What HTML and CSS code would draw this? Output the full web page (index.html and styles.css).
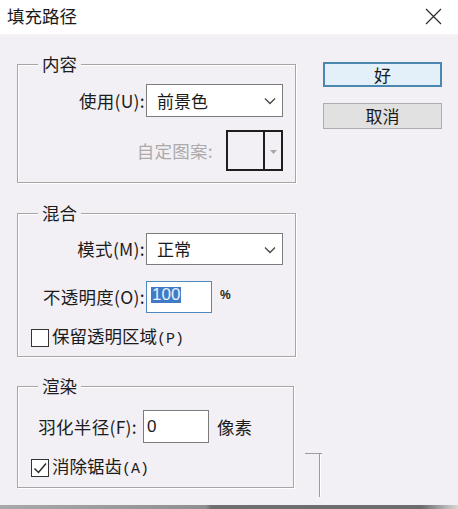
FILE: index.html
```html
<!DOCTYPE html>
<html lang="zh-CN">
<head>
<meta charset="utf-8">
<title>填充路径</title>
<link rel="stylesheet" href="styles.css">
</head>
<body>
<div class="window">
  <header class="titlebar">
    <span class="title">填充路径</span>
    <svg class="close" width="17" height="17" viewBox="0 0 17 17"><path d="M1 1L16 16M16 1L1 16" stroke="#2b2b2b" stroke-width="1.2" fill="none"/></svg>
  </header>
  <main class="content">
    <div class="groups">
      <section class="group g1">
        <span class="legend">内容</span>
        <div class="row">
          <span class="lbl">使用(U):</span>
          <div class="select">前景色<svg class="chev" width="12" height="8" viewBox="0 0 12 8"><path d="M1 1.5L6 6.5L11 1.5" stroke="#4a4a4a" stroke-width="1.4" fill="none"/></svg></div>
        </div>
        <div class="row gap13">
          <span class="lbl muted">自定图案:</span>
          <div class="pattern"><span class="swatch"></span><span class="pbtn"><svg width="7" height="4" viewBox="0 0 7 4"><path d="M0 0H7L3.5 4Z" fill="#a8a8a8"/></svg></span></div>
        </div>
      </section>

      <section class="group g2">
        <span class="legend">混合</span>
        <div class="row">
          <span class="lbl">模式(M):</span>
          <div class="select h32">正常<svg class="chev" width="12" height="8" viewBox="0 0 12 8"><path d="M1 1.5L6 6.5L11 1.5" stroke="#4a4a4a" stroke-width="1.4" fill="none"/></svg></div>
        </div>
        <div class="row gap16">
          <span class="lbl lbl-op">不透明度(O):</span>
          <div class="field focus"><span class="sel">100</span></div>
          <span class="unit pct">%</span>
        </div>
        <label class="check gap15">
          <span class="box"></span>
          <span class="ctext">保留透明区域<span class="mono">(P)</span></span>
        </label>
      </section>

      <section class="group g3">
        <span class="legend">渲染</span>
        <div class="row">
          <span class="lbl lbl-f">羽化半径(F):</span>
          <div class="field h33"><span class="val">0</span></div>
          <span class="unit">像素</span>
        </div>
        <label class="check gap15">
          <span class="box"><svg width="16" height="16" viewBox="0 0 16 16"><path d="M2.5 8.5L6.5 12.5L14 3.5" stroke="#2a2a2a" stroke-width="1.5" fill="none"/></svg></span>
          <span class="ctext">消除锯齿<span class="mono">(A)</span></span>
        </label>
      </section>
    </div>

    <div class="buttons">
      <button class="btn primary">好</button>
      <button class="btn">取消</button>
      <svg class="bracket" width="18" height="45" viewBox="0 0 18 45"><path d="M0 0.5H17M14.5 0V44" stroke="#9c9c9c" stroke-width="1" fill="none"/><path d="M15.5 2V44" stroke="#ffffff" stroke-width="1" fill="none"/></svg>
    </div>
  </main>
  <div class="taskbar"></div>
</div>
</body>
</html>
```

FILE: styles.css
```css
* { box-sizing: border-box; }

html, body {
  margin: 0;
  padding: 0;
  background: #f3f0f5;
}

.window {
  width: 458px;
  height: 509px;
  display: flex;
  flex-direction: column;
  overflow: hidden;
  font-family: "Noto Sans CJK SC", "Noto Sans", sans-serif;
  font-size: 17.5px;
  color: #1c1c1c;
  background: #f3f0f5;
}

.titlebar {
  height: 35px;
  flex: none;
  background: #ffffff;
  display: flex;
  align-items: center;
  justify-content: space-between;
  padding: 0 16px 2px 7px;
  border-bottom: 1px solid #f6f4f8;
}

.title {
  font-size: 17.5px;
  line-height: 22px;
  color: #1a1a1a;
}

.close { display: block; margin-top: 1px; }

.content {
  flex: 1;
  display: flex;
  align-items: flex-start;
  padding-left: 17px;
}

.groups {
  width: 279px;
  display: flex;
  flex-direction: column;
}

.group {
  position: relative;
  border: 1px solid #a6a6a6;
  box-shadow: inset 1px 1px 0 #ffffff, 1px 1px 0 #ffffff;
  padding: 19px 11px 11px 0;
  display: flex;
  flex-direction: column;
}

.g1 { margin-top: 29px; }
.g2 { margin-top: 30px; padding-bottom: 9px; }
.g3 { margin-top: 29px; padding-top: 23px; padding-bottom: 10px; width: 277px; }

.legend {
  position: absolute;
  top: -12px;
  left: 20px;
  padding: 0 4px;
  background: #f3f0f5;
  line-height: 22px;
  font-size: 17.5px;
}

.row {
  display: flex;
  align-items: center;
}

.gap13 { margin-top: 13px; }
.gap15 { margin-top: 15px; }
.gap16 { margin-top: 16px; }

.lbl {
  width: 127px;
  text-align: right;
  line-height: 22px;
  white-space: nowrap;
  margin-right: 1px;
  letter-spacing: 0.3px;
}

.lbl-op { margin-right: 1px; }
.lbl-f { width: 119px; margin-right: 6px; }

.muted { color: #ababab; margin-right: 12px; width: 195px; }

.select {
  width: 137px;
  height: 33px;
  background: #ffffff;
  border: 1px solid #7c7c7c;
  display: flex;
  align-items: center;
  justify-content: space-between;
  padding: 0 6px 0 10px;
  line-height: 22px;
  font-size: 17px;
}

.select.h32 { height: 32px; }

.chev { display: block; margin-top: 1px; }

.pattern {
  width: 57px;
  height: 41px;
  border: 2px solid #1e1e1e;
  display: flex;
  margin-right: 1px;
  margin-left: auto;
}

.swatch {
  width: 37px;
  border-right: 2px solid #1e1e1e;
}

.pbtn {
  flex: 1;
  display: flex;
  align-items: center;
  justify-content: center;
  padding-top: 2px;
}

.field {
  width: 66px;
  height: 32px;
  background: #ffffff;
  border: 1px solid #7c7c7c;
  display: flex;
  align-items: center;
  padding-left: 4px;
  font-family: "Liberation Sans", Arial, sans-serif;
  font-size: 17px;
}

.field.focus {
  border-color: #4f88bf;
  margin-left: 0;
  padding-bottom: 5px;
  padding-left: 4px;
}

.field.h33 { height: 33px; padding-left: 3px; }

.sel {
  background: #3f7bc6;
  color: #e8f0fb;
  line-height: 16px;
  padding: 0 1px;
}

.val { line-height: 18px; }

.unit {
  margin-left: 8px;
  line-height: 22px;
}

.pct {
  font-family: "Liberation Sans", Arial, sans-serif;
  font-size: 12px;
  font-weight: bold;
  line-height: 12px;
  margin-bottom: 5px;
}

.check {
  display: flex;
  align-items: center;
  padding-left: 13px;
  height: 19px;
}

.box {
  width: 18px;
  height: 18px;
  border: 1px solid #333333;
  background: #ffffff;
  display: flex;
  align-items: center;
  justify-content: center;
  margin-right: 3px;
}

.ctext {
  line-height: 22px;
  white-space: nowrap;
}

.mono {
  font-family: "Liberation Mono", "DejaVu Sans Mono", monospace;
  font-size: 15px;
}

.buttons {
  margin-left: 27px;
  margin-top: 27px;
  display: flex;
  flex-direction: column;
}

.btn {
  width: 119px;
  height: 26px;
  margin: 0;
  padding: 0;
  font-family: "Noto Sans CJK SC", "Noto Sans", sans-serif;
  font-size: 17px;
  line-height: 20px;
  color: #1a1a1a;
  background: #e1e1e1;
  border: 1px solid #adadad;
  display: block;
}

.btn.primary {
  height: 25px;
  background: #e3f0fa;
  border: 2px solid #4a88b0;
  margin-bottom: 16px;
}

.bracket {
  display: block;
  margin-top: 324px;
  margin-left: -18px;
}

.taskbar {
  height: 4px;
  flex: none;
  background: linear-gradient(to right, #a9a9ab 0, #8f8f92 45%, #6f6f70 46%, #6c6c6d 92%, #d8d8d8 100%);
}
```
